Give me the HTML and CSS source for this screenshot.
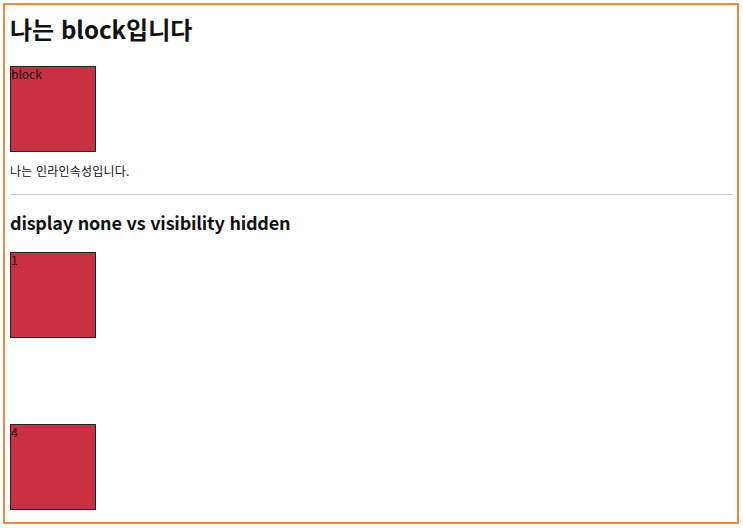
FILE: index.html
```html
<!DOCTYPE html>
<html lang="ko">
<head>
<meta charset="utf-8">
<link rel="stylesheet" href="styles.css">
</head>
<body>
<div class="frame">
  <h1 class="title">나는 block입니다</h1>
  <div class="box">block</div>
  <p class="inline-text">나는 인라인속성입니다.</p>
  <hr class="rule">
  <h2 class="subtitle">display none vs visibility hidden</h2>
  <div class="box">1</div>
  <div class="box gone">2</div>
  <div class="box hidden">3</div>
  <div class="box">4</div>
</div>
</body>
</html>
```
FILE: styles.css
```css
html, body {
  margin: 0;
  padding: 0;
  background: #fff;
}
body {
  font-family: "Noto Sans CJK KR", "Noto Sans", sans-serif;
  color: #111;
}
.frame {
  margin: 3px 0 0 3px;
  width: 736px;
  height: 521px;
  box-sizing: border-box;
  border: 2px solid #ef8a3c;
  padding: 0 5px;
  overflow: hidden;
}
.title {
  font-size: 24px;
  line-height: 34px;
  font-weight: 700;
  margin: 7px 0 20px;
}
.box {
  width: 84px;
  height: 84px;
  background: #c93142;
  border: 1px solid #222;
  font-size: 12px;
  line-height: 14px;
  color: #111;
}
.gone {
  display: none;
}
.hidden {
  visibility: hidden;
}
.inline-text {
  font-size: 12px;
  line-height: 18px;
  margin: 10px 0 0;
  letter-spacing: 0.2px;
}
.rule {
  border: 0;
  border-top: 1px solid #c8c8c8;
  margin: 14px 0 0;
  height: 0;
}
.subtitle {
  font-size: 18px;
  line-height: 26px;
  font-weight: 700;
  margin: 14px 0 17px;
  letter-spacing: -0.2px;
}
```
